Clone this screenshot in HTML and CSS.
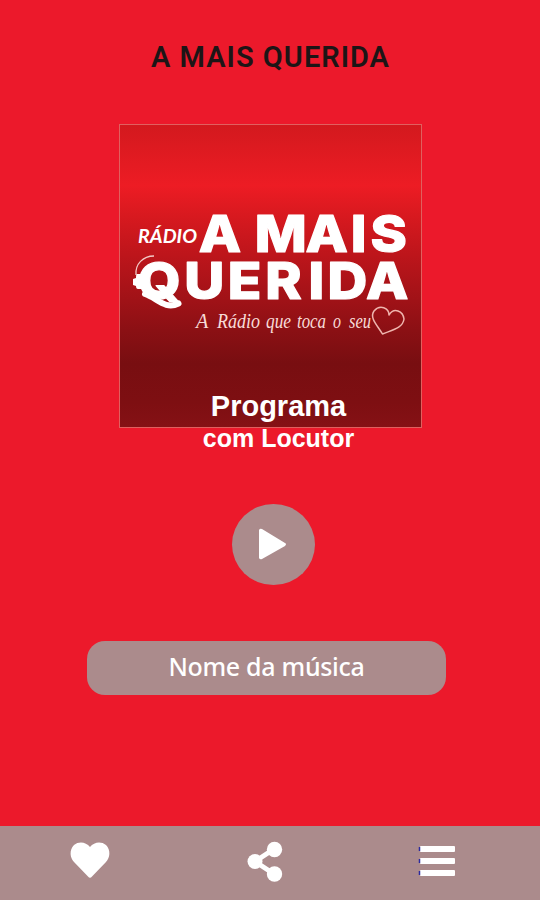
FILE: index.html
```
<!DOCTYPE html>
<html lang="pt-BR">
<head>
    <meta charset="utf-8">
    <title>A Mais Querida</title>
    <meta name="viewport" content="width=device-width, initial-scale=1">
    <link rel="stylesheet" href="styles.css">
</head>
<body>
    <div class="app">
        <h1 class="title">A MAIS QUERIDA</h1>

        <div class="cover">
            <svg class="logo" viewBox="119 124 303 304">
                <text class="logo-small" x="138" y="243" textLength="59" lengthAdjust="spacingAndGlyphs">RÁDIO</text>
                <g transform="scale(1.08 1)">
                    <text class="logo-big" y="252.500" x="184 215 235.900 282.800 324.800 343">A MAIS</text>
                    <text class="logo-big" y="299.500" x="127.500 170.500 211 245.500 285.600 303.200 338.900">QUERIDA</text>
                </g>
                <!-- headphone and tail of the Q -->
                <path class="band" d="M136 275C135 264 143 256 154 256"/>
                <path class="pad" d="M137 274h5v15h-4q-2 0-2-3l-3-1v-6l3-1q0-4 1-4z"/>
                <path class="tail" d="M145 294C157 298 165 310 178.500 303.500"/>
                <text class="slogan" y="328">
                    <tspan x="196" textLength="12" lengthAdjust="spacingAndGlyphs">A</tspan>
                    <tspan x="217" textLength="43" lengthAdjust="spacingAndGlyphs">Rádio</tspan>
                    <tspan x="266" textLength="25" lengthAdjust="spacingAndGlyphs">que</tspan>
                    <tspan x="297" textLength="29" lengthAdjust="spacingAndGlyphs">toca</tspan>
                    <tspan x="333" textLength="8" lengthAdjust="spacingAndGlyphs">o</tspan>
                    <tspan x="349" textLength="22" lengthAdjust="spacingAndGlyphs">seu</tspan>
                </text>
                <path class="heart-line" d="M382.500 334C378 326 369 318 374 311C380 304 389 308 389 315C394 307 403 311 404 319C403 328 392 330 382.500 334z"/>
            </svg>
        </div>

        <div class="program">
            <div class="program-name">Programa</div>
            <div class="program-host">com Locutor</div>
        </div>

        <button class="play">
            <svg width="83" height="81" viewBox="0 0 83 81">
                <path d="M27 26v28q1 2 3 1l23-13q2-2 0-3L30 25q-2-1-3 1z"/>
            </svg>
        </button>

        <div class="song">Nome da música</div>

        <nav class="bottom-bar">
            <svg width="180" height="74" viewBox="0 0 180 74">
                <path d="M90 21C86 16 79 15 74 19C69 24 70 32 74 36L88 50.500Q90 53 92 50.500L106 36C110 32 111 24 106 19C101 15 94 16 90 21z"/>
            </svg>
            <svg width="180" height="74" viewBox="180 0 180 74">
                <path class="share-line" d="M274 23L255 35.500L274 48"/>
                <circle cx="274.500" cy="23.500" r="7.700"/>
                <circle cx="255" cy="35.500" r="7.500"/>
                <circle cx="274.500" cy="48" r="7.700"/>
            </svg>
            <svg width="180" height="74" viewBox="360 0 180 74">
                <rect x="420" y="20" width="35" height="6" rx="1"/>
                <rect x="420" y="32" width="35" height="6" rx="1"/>
                <rect x="420" y="44" width="35" height="6" rx="1"/>
                <path class="menu-edge" d="M419.500 21v4m0 8v4m0 8v4"/>
            </svg>
        </nav>
    </div>
</body>
</html>
```
FILE: styles.css
```
* { box-sizing: border-box; }
body { margin: 0; background-color: #ec192b; font-family: "Liberation Sans", Arial, sans-serif; }
.app { display: flex; flex-direction: column; align-items: center; width: 540px; height: 900px; overflow: hidden; }
.title { margin: 39px 0 0 1px; height: 36px; line-height: 36px; font-family: Roboto, sans-serif; font-size: 29px; font-weight: 600; letter-spacing: 1px; color: #1d1516; white-space: nowrap; }

.cover { flex: none; width: 303px; height: 304px; margin-top: 49px; border: 1px solid #e0605f; background: linear-gradient(#d3191e 0%, #ed1c24 20%, #d8191f 30%, #bd151b 43%, #a01217 58%, #8b1014 68%, #780e11 79%, #7e0f12 92%, #851115 100%); }
.logo { display: block; width: 303px; height: 304px; margin: -1px; fill: #fff; }
.logo-small { font-family: Lato, sans-serif; font-size: 19px; font-weight: 700; font-style: italic; }
.logo-big { font-family: Inter, sans-serif; font-size: 51px; font-weight: 800; stroke: #fff; stroke-width: 1.2; stroke-linejoin: round; }
.slogan { font-family: "Liberation Serif", serif; font-size: 20px; font-style: italic; fill: #f8dcd8; }
.band { fill: none; stroke: #f3c9c5; stroke-width: 1.3; }
.tail { fill: none; stroke: #fff; stroke-width: 6; stroke-linecap: round; }
.heart-line { fill: none; stroke: #efb5ae; stroke-width: 1.5; stroke-linejoin: round; }

/* program text overlaps the bottom of the cover */
.program { margin-top: -38px; margin-left: 17px; position: relative; text-align: center; color: #fff; font-weight: bold; }
.program-name { font-size: 29px; line-height: 33px; }
.program-host { font-size: 25px; line-height: 30px; }

.play { flex: none; width: 83px; height: 81px; margin: 51px 0 0 6px; padding: 0; border: 0; border-radius: 50%; background-color: #ab8b8c; fill: #fff; }
.play svg { display: block; }
.song { flex: none; width: 359px; height: 54px; margin: 56px 7px 0 0; border-radius: 18px; background-color: #ab8b8c; color: #fff; font-family: "Noto Sans", sans-serif; font-size: 25px; font-weight: 500; letter-spacing: -0.3px; line-height: 50px; text-align: center; }

.bottom-bar { display: flex; flex: none; width: 540px; height: 74px; margin-top: auto; background-color: #ab8b8c; fill: #fff; }
.share-line { fill: none; stroke: #fff; stroke-width: 5; }
.menu-edge { stroke: #2b2aa0; stroke-width: 1.5; }
```
